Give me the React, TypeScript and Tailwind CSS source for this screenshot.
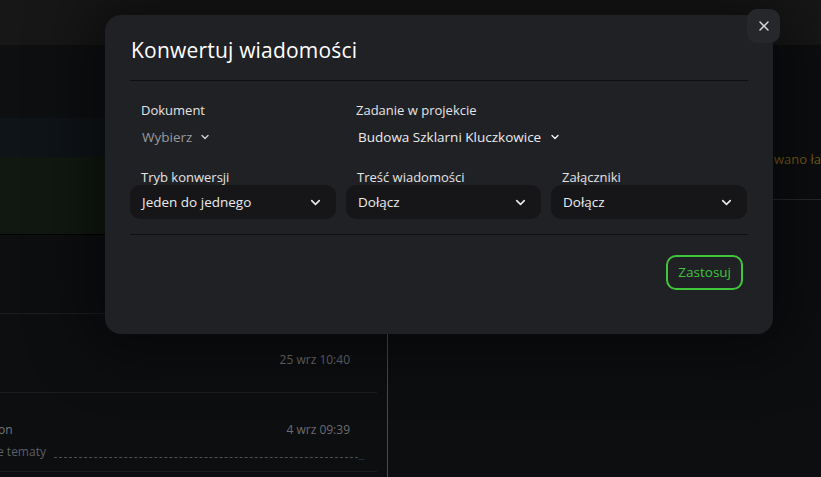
import React from 'react';
import { ChevronDown, X } from 'lucide-react';

const font = { fontFamily: '"Open Sans", "Noto Sans", sans-serif' };

const Select: React.FC<{ label: string; value: string }> = ({ label, value }) => (
  <div className="flex flex-col">
    <span className="pl-[11px] text-[13px] leading-[16px] text-[#e4e4e6]">{label}</span>
    <div className="flex h-[34px] items-center justify-between rounded-[10px] bg-[#161618] pl-[12px] pr-[13px]">
      <span className="text-[13.5px] text-[#ececee]">{value}</span>
      <ChevronDown size={15} strokeWidth={2.6} className="text-[#e8e8ea]" />
    </div>
  </div>
);

export default function App() {
  return (
    <div style={font} className="relative h-[477px] w-[821px] overflow-hidden bg-[#0d0e10]">
      {/* page behind the overlay */}
      <div className="h-[45px] bg-[#171717]" />
      <div className="flex h-[432px]">
        <div className="flex w-[389px] flex-col border-r border-[#4a4a4c]">
          <div className="h-[73px] bg-[#0e0f11]" />
          <div className="h-[39px] bg-[#0f1418]" />
          <div className="h-[78px] border-b border-[#000] bg-[#111811]" />
          <div className="h-[79px] w-[377px] border-b border-[#1c1d20]" />
          <div className="flex h-[79px] w-[377px] flex-col justify-end border-b border-[#1c1d20] pb-[23px]">
            <div className="flex justify-end pr-[27px] text-[12px] text-[#6b6c70]">25 wrz 10:40</div>
          </div>
          <div className="flex h-[79px] w-[377px] flex-col justify-end border-b border-[#1c1d20] pb-[10px]">
            <div className="flex items-center justify-between pr-[27px] text-[12px] text-[#76777b]">
              <span className="-ml-[2px]">on</span>
              <span className="text-[#6b6c70]">4 wrz 09:39</span>
            </div>
            <div className="mt-[4px] flex items-end text-[12px] text-[#5d5e62]">
              <span className="-ml-[3px]">e tematy</span>
              <span className="mb-[3px] ml-[8px] w-[304px] border-b border-dashed border-[#4e4f53]" />
              <span className="text-[8px] leading-none">...</span>
            </div>
          </div>
        </div>
        <div className="flex flex-1 flex-col">
          <div className="h-[155px] border-b border-[#2a2a2c] pl-[386px] pt-[105px] text-[13px] whitespace-nowrap text-[#7a5e12]">
            wano ła
          </div>
        </div>
      </div>

      {/* modal */}
      <div className="absolute left-[105px] top-[15px] w-[668px] rounded-[16px] bg-[#202125] px-[25px] pb-[44px] pt-[20px] shadow-[0_0_60px_20px_rgba(0,0,0,0.45)]">
        <h2 className="pl-[1px] text-[21px] leading-[30px] tracking-[0.2px] text-white">Konwertuj wiadomości</h2>
        <div className="mt-[15px] border-t border-[#0f0f11]" />

        <div className="mt-[20px] grid grid-cols-[206px_195px_196px] gap-x-[10px]">
          <div className="flex flex-col pl-[11px]">
            <span className="text-[13px] leading-[18px] text-[#e4e4e6]">Dokument</span>
            <div className="mt-[9px] flex h-[18px] items-center gap-[7px] pl-[1px]">
              <span className="text-[13.5px] text-[#9a9a9e]">Wybierz</span>
              <ChevronDown size={12} strokeWidth={3} className="text-[#c8c8cc]" />
            </div>
          </div>
          <div className="flex flex-col pl-[10px]">
            <span className="text-[13px] leading-[18px] whitespace-nowrap text-[#e4e4e6]">Zadanie w projekcie</span>
            <div className="mt-[9px] flex h-[18px] items-center gap-[8px] pl-[2px] whitespace-nowrap">
              <span className="text-[13.5px] text-[#ececee]">Budowa Szklarni Kluczkowice</span>
              <ChevronDown size={12} strokeWidth={3} className="shrink-0 text-[#e8e8ea]" />
            </div>
          </div>
        </div>

        <div className="mt-[23px] grid grid-cols-[206px_195px_196px] gap-x-[10px]">
          <Select label="Tryb konwersji" value="Jeden do jednego" />
          <Select label="Treść wiadomości" value="Dołącz" />
          <Select label="Załączniki" value="Dołącz" />
        </div>

        <div className="mt-[15px] border-t border-[#0f0f11]" />

        <div className="mt-[20px] flex justify-end pr-[5px]">
          <button className="h-[35px] rounded-[10px] border-2 border-[#3fc63a] px-[10px] text-[13.5px] text-[#3fc63a]">
            Zastosuj
          </button>
        </div>
      </div>

      {/* close button */}
      <button className="absolute left-[747px] top-[9px] flex h-[34px] w-[33px] items-center justify-center rounded-[10px] bg-[#26272b]">
        <X size={16} strokeWidth={2.2} className="text-[#d8d8da]" />
      </button>
    </div>
  );
}
